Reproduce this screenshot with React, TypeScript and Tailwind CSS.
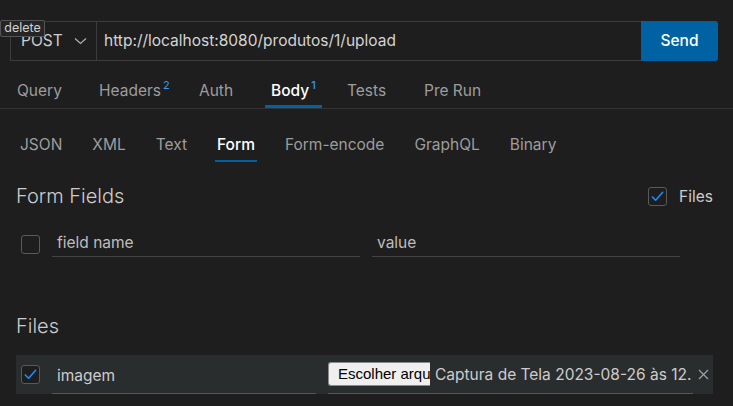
import React from "react";

function Check({ checked }: { checked: boolean }) {
  return (
    <span className="flex h-[19px] w-[19px] items-center justify-center rounded-[3px] border border-[#5a5a5a] bg-[#1e1e1e]">
      {checked && (
        <svg width="15" height="15" viewBox="0 0 16 16" fill="none">
          <path d="M2.5 8.5 L6 12 L13.5 3.5" stroke="#1a8cff" strokeWidth="1.7" strokeLinecap="round" strokeLinejoin="round" />
        </svg>
      )}
    </span>
  );
}

export default function App() {
  const top = [
    { label: "Query", w: "w-[82px]" },
    { label: "Headers", sup: "2", w: "w-[100px]" },
    { label: "Auth", w: "w-[72px]" },
    { label: "Body", sup: "1", w: "w-[76px]", active: true },
    { label: "Tests", w: "w-[77px]" },
    { label: "Pre Run", w: "w-[80px]" },
  ];
  const sub = ["JSON", "XML", "Text", "Form", "Form-encode", "GraphQL", "Binary"];
  return (
    <div
      className="relative h-[406px] w-[733px] overflow-hidden bg-[#1e1e1e] text-[#cccccc]"
      style={{ fontFamily: "Inter, 'Noto Sans', sans-serif" }}
    >
      {/* URL bar */}
      <div className="flex h-[61px] items-end pl-[10px] pr-[15px]">
        <div className="flex h-[40px] flex-1 border border-r-0 border-[#3c3c3c]">
          <div className="flex w-[86px] items-center justify-between border-r border-[#3c3c3c] pl-[10px] pr-[9px] text-[15.5px] text-[#cccccc]">
            <span>POST</span>
            <svg width="13" height="8" viewBox="0 0 13 8" fill="none">
              <path d="M1 1.5 L6.5 6.5 L12 1.5" stroke="#b0b0b0" strokeWidth="1.2" />
            </svg>
          </div>
          <div className="flex flex-1 items-center pl-[7px] text-[15.5px] text-[#d4d4d4]">
            http://localhost:8080/produtos/1/upload
          </div>
        </div>
        <button className="flex h-[40px] w-[77px] items-center justify-center rounded-r-[3px] bg-[#0062a3] text-[15.5px] font-medium text-white">
          Send
        </button>
      </div>

      {/* tooltip */}
      <div className="absolute left-0 top-[20px] flex h-[17px] w-[45px] items-center justify-center rounded-[2px] border border-[#555555] bg-[#252526] text-[12.5px] text-[#d0d0d0]">
        delete
      </div>

      {/* top tabs */}
      <div className="flex h-[48px] border-b border-[#333333] pl-[11px]">
        {top.map((t) => (
          <div key={t.label} className={`${t.w} flex`}>
            <div
              className={`flex h-[47px] items-center border-b-[3px] px-[6px] pt-[15px] text-[15.5px] ${
                t.active ? "border-[#0062a3] font-medium text-white" : "border-transparent text-[#9d9d9d]"
              }`}
            >
              <span>{t.label}</span>
              {t.sup && <span className="relative -top-[5px] ml-[2px] text-[11px] text-[#3794ff]">{t.sup}</span>}
            </div>
          </div>
        ))}
      </div>

      {/* sub tabs */}
      <div className="flex gap-[26px] pl-[18px] pt-[24px]">
        {sub.map((s) => (
          <div
            key={s}
            className={`border-b-2 px-[2px] pb-[4px] text-[15.5px] ${
              s === "Form" ? "border-[#0062a3] font-medium text-white" : "border-transparent text-[#9d9d9d]"
            }`}
          >
            {s}
          </div>
        ))}
      </div>

      {/* form fields header */}
      <div className="mt-[19px] flex items-center justify-between pl-[16px] pr-[20px]">
        <span className="text-[20px] font-light text-[#cccccc]">Form Fields</span>
        <div className="flex items-center gap-[12px]">
          <Check checked />
          <span className="text-[15.5px] text-[#cccccc]">Files</span>
        </div>
      </div>

      {/* field row */}
      <div className="mt-[20px] flex items-center pl-[21px]">
        <Check checked={false} />
        <div className="ml-[12px] flex h-[26px] w-[308px] items-center border-b border-[#444444] pl-[5px] pb-[2px] text-[15.5px] text-[#bdbdbd]">
          field name
        </div>
        <div className="ml-[12px] flex h-[26px] w-[308px] items-center border-b border-[#444444] pl-[5px] pb-[2px] text-[15.5px] text-[#bdbdbd]">
          value
        </div>
      </div>

      {/* files header */}
      <div className="mt-[54px] pl-[16px] text-[20px] font-light text-[#cccccc]">Files</div>

      {/* file row */}
      <div className="ml-[16px] mt-[14px] flex h-[39px] w-[697px] items-center bg-[#2a2d2e] pl-[5px]">
        <Check checked />
        <div className="ml-[12px] flex h-[39px] w-[264px] items-center border-b border-[#555555] pl-[5px] pt-[3px] text-[15.5px] text-[#cccccc]">
          imagem
        </div>
        <div className="ml-[12px] flex h-[39px] w-[365px] items-center overflow-hidden border-b border-[#555555]">
          <div className="flex h-[24px] w-[102px] shrink-0 items-center overflow-hidden whitespace-nowrap rounded-l-[3px] border border-r-0 border-[#8a8a8a] bg-[#efefef] pl-[9px] text-[15px] text-black" style={{ fontFamily: "'Liberation Sans', Arial, sans-serif" }}>
            Escolher arquivo
          </div>
          <span className="ml-[5px] whitespace-nowrap text-[15.5px] text-[#cccccc]">Captura de Tela 2023-08-26 às 12.</span>
        </div>
        <svg className="ml-[5px]" width="11" height="11" viewBox="0 0 11 11" fill="none">
          <path d="M1 1 L10 10 M10 1 L1 10" stroke="#a0a0a0" strokeWidth="1.2" />
        </svg>
      </div>
    </div>
  );
}
